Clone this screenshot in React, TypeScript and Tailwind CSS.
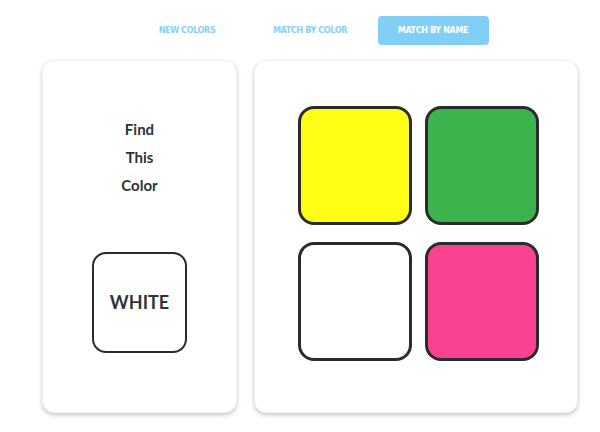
export default function App() {
  const tabs = [
    { label: "NEW COLORS", active: false },
    { label: "MATCH BY COLOR", active: false },
    { label: "MATCH BY NAME", active: true },
  ];
  const swatches = ["bg-[#fefe17]", "bg-[#3db34e]", "bg-white", "bg-[#f94291]"];

  return (
    <div className="w-[600px] h-[432px] bg-white overflow-hidden">
      <div className="ml-[42px] w-[536px]">
        <nav className="flex justify-center gap-[12px] pt-[16px]">
          {tabs.map((t) => (
            <button
              key={t.label}
              className={
                t.active
                  ? "w-[111px] h-[29px] rounded-[4px] bg-[#81cff4] text-white text-[9px] font-bold tracking-[-0.4px] [font-stretch:condensed] font-['DejaVu_Sans_Condensed','DejaVu_Sans',sans-serif]"
                  : "w-[111px] h-[29px] rounded-[4px] text-[#86d0f4] text-[9px] font-bold tracking-[-0.4px] [font-stretch:condensed] font-['DejaVu_Sans_Condensed','DejaVu_Sans',sans-serif]"
              }
            >
              {t.label}
            </button>
          ))}
        </nav>

        <div className="flex gap-[17px] mt-[15px] font-['Lato',sans-serif] text-[#2d3436]">
          <div className="w-[195px] h-[353px] rounded-[12px] bg-white border border-[#f0f0f0] shadow-[0_2px_4px_rgba(0,0,0,0.22)] flex flex-col items-center">
            <div className="mt-[54px] text-[15px] font-bold leading-[28px] text-center">
              <div>Find</div>
              <div>This</div>
              <div>Color</div>
            </div>
            <div className="mt-[53px] w-[95px] h-[101px] rounded-[14px] border-[2.5px] border-[#2b2b2b] flex items-center justify-center">
              <span className="text-[18px] font-bold">WHITE</span>
            </div>
          </div>

          <div className="w-[324px] h-[353px] rounded-[12px] bg-white border border-[#f0f0f0] shadow-[0_2px_4px_rgba(0,0,0,0.22)] pt-[45px] pl-[43px]">
            <div className="grid grid-cols-[114px_114px] gap-x-[13px] gap-y-[17px]">
              {swatches.map((c, i) => (
                <div
                  key={i}
                  className={`h-[119px] rounded-[16px] border-[3px] border-[#2b2b2b] ${c}`}
                />
              ))}
            </div>
          </div>
        </div>
      </div>
    </div>
  );
}
